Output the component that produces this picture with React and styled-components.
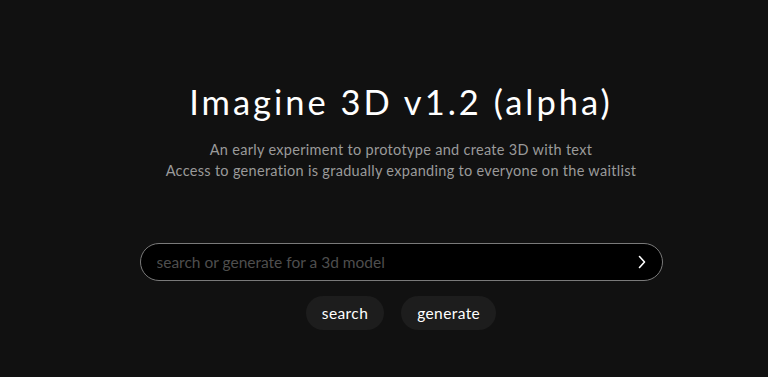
import styled, { createGlobalStyle } from 'styled-components'

const Global = createGlobalStyle`
  html, body {
    margin: 0;
    background: #111111;
  }
  body {
    font-family: Lato, 'Noto Sans', sans-serif;
    color: #ffffff;
  }
`

const Page = styled.main`
  min-height: 377px;
  display: flex;
  flex-direction: column;
  align-items: center;
  padding: 79px 0 0 34px;
  box-sizing: border-box;
`

const Title = styled.h1`
  margin: 0;
  font-size: 34.5px;
  font-weight: 400;
  letter-spacing: 3px;
  line-height: 46px;
`

const Sub = styled.p`
  margin: 14px 0 0;
  font-size: 14.5px;
  line-height: 21px;
  color: #9a9a9a;
  text-align: center;
  letter-spacing: 0.3px;
`

const SearchBar = styled.form`
  margin-top: 62px;
  width: 523px;
  height: 38px;
  box-sizing: border-box;
  border: 1px solid #7a7a7a;
  border-radius: 19px;
  background: #000;
  display: flex;
  align-items: center;
  padding: 0 14px 0 16px;
`

const Input = styled.input`
  flex: 1;
  background: transparent;
  border: none;
  outline: none;
  color: #fff;
  font-family: inherit;
  font-size: 15.5px;
  padding: 0;
  &::placeholder {
    color: #4e4e4e;
  }
`

const Go = styled.button`
  background: none;
  border: none;
  padding: 0;
  color: #fff;
  display: flex;
  align-items: center;
  cursor: pointer;
`

const Actions = styled.div`
  margin-top: 15px;
  display: flex;
  gap: 17px;
`

const Pill = styled.button`
  height: 34px;
  padding: 0 16px;
  border: none;
  border-radius: 17px;
  background: #1d1d1d;
  color: #fff;
  font-family: inherit;
  font-size: 15.5px;
  letter-spacing: 0.4px;
  cursor: pointer;
`

export default function App() {
  return (
    <>
      <Global />
      <Page>
        <Title>Imagine 3D v1.2 (alpha)</Title>
        <Sub>
          An early experiment to prototype and create 3D with text
          <br />
          Access to generation is gradually expanding to everyone on the waitlist
        </Sub>
        <SearchBar onSubmit={(e) => e.preventDefault()}>
          <Input placeholder="search or generate for a 3d model" />
          <Go type="submit" aria-label="submit">
            <svg width="12" height="14" viewBox="0 0 12 14" fill="none">
              <path d="M3.5 1.5 L8.5 7 L3.5 12.5" stroke="#fff" strokeWidth="1.6" strokeLinecap="round" strokeLinejoin="round" />
            </svg>
          </Go>
        </SearchBar>
        <Actions>
          <Pill>search</Pill>
          <Pill>generate</Pill>
        </Actions>
      </Page>
    </>
  )
}
